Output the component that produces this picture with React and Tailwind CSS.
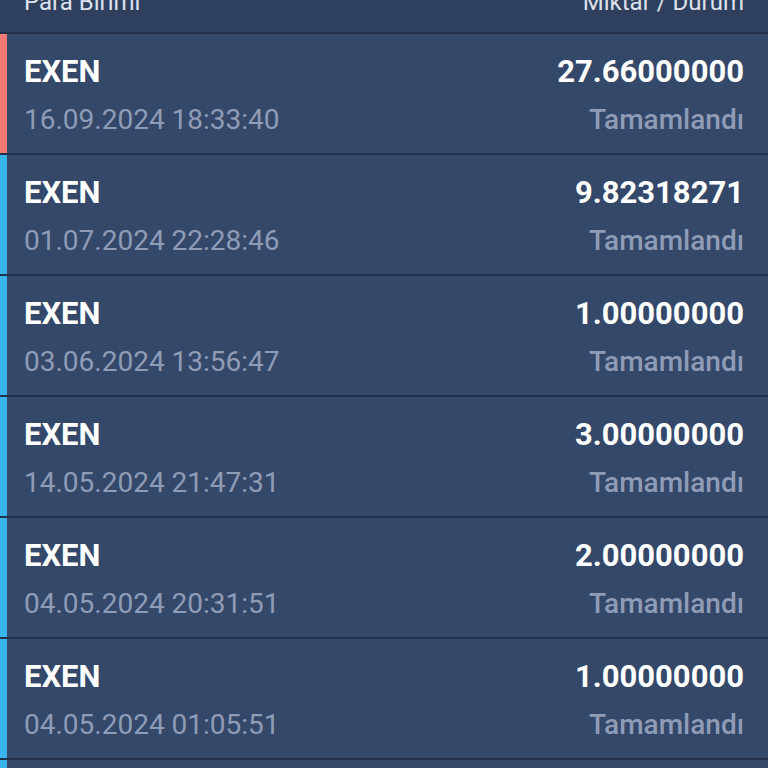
import React from 'react';

const rows = [
  { coin: 'EXEN', date: '16.09.2024 18:33:40', amount: '27.66000000', status: 'Tamamlandı', accent: 'bg-[#f47a75]' },
  { coin: 'EXEN', date: '01.07.2024 22:28:46', amount: '9.82318271', status: 'Tamamlandı', accent: 'bg-[#3ab4ea]' },
  { coin: 'EXEN', date: '03.06.2024 13:56:47', amount: '1.00000000', status: 'Tamamlandı', accent: 'bg-[#3ab4ea]' },
  { coin: 'EXEN', date: '14.05.2024 21:47:31', amount: '3.00000000', status: 'Tamamlandı', accent: 'bg-[#3ab4ea]' },
  { coin: 'EXEN', date: '04.05.2024 20:31:51', amount: '2.00000000', status: 'Tamamlandı', accent: 'bg-[#3ab4ea]' },
  { coin: 'EXEN', date: '04.05.2024 01:05:51', amount: '1.00000000', status: 'Tamamlandı', accent: 'bg-[#3ab4ea]' },
  { coin: 'EXEN', date: '01.05.2024 12:00:00', amount: '1.00000000', status: 'Tamamlandı', accent: 'bg-[#3ab4ea]' },
];

const HistoryRow = ({ row }) => (
  <div className="flex h-[121px] shrink-0 bg-[#34486a] border-b-2 border-[#22304b]">
    <div className={`w-[7px] shrink-0 ${row.accent}`} />
    <div className="flex flex-1 justify-between pl-[17px] pr-[24px] pt-[19px]">
      <div className="flex flex-col">
        <span className="text-[31px] leading-[38px] font-bold text-white">{row.coin}</span>
        <span className="text-[28px] leading-[40px] mt-[9px] text-[#8f9cb6]">{row.date}</span>
      </div>
      <div className="flex flex-col items-end">
        <span className="text-[31px] leading-[38px] font-bold text-white">{row.amount}</span>
        <span className="text-[28px] leading-[40px] mt-[9px] font-medium text-[#8f9cb6]">{row.status}</span>
      </div>
    </div>
  </div>
);

export default function App() {
  return (
    <div className="flex flex-col h-[768px] w-[768px] overflow-hidden bg-[#34486a] font-['Roboto',sans-serif]">
      <div className="flex shrink-0 justify-between items-end h-[34px] px-[24px] bg-[#2f405f] border-b-2 border-[#22304b] overflow-hidden">
        <span className="text-[24px] leading-[24px] mb-[18px] text-[#dde2ec]">Para Birimi</span>
        <span className="text-[24px] leading-[24px] mb-[18px] text-[#dde2ec]">Miktar / Durum</span>
      </div>
      {rows.map((row, i) => (
        <HistoryRow key={i} row={row} />
      ))}
    </div>
  );
}
